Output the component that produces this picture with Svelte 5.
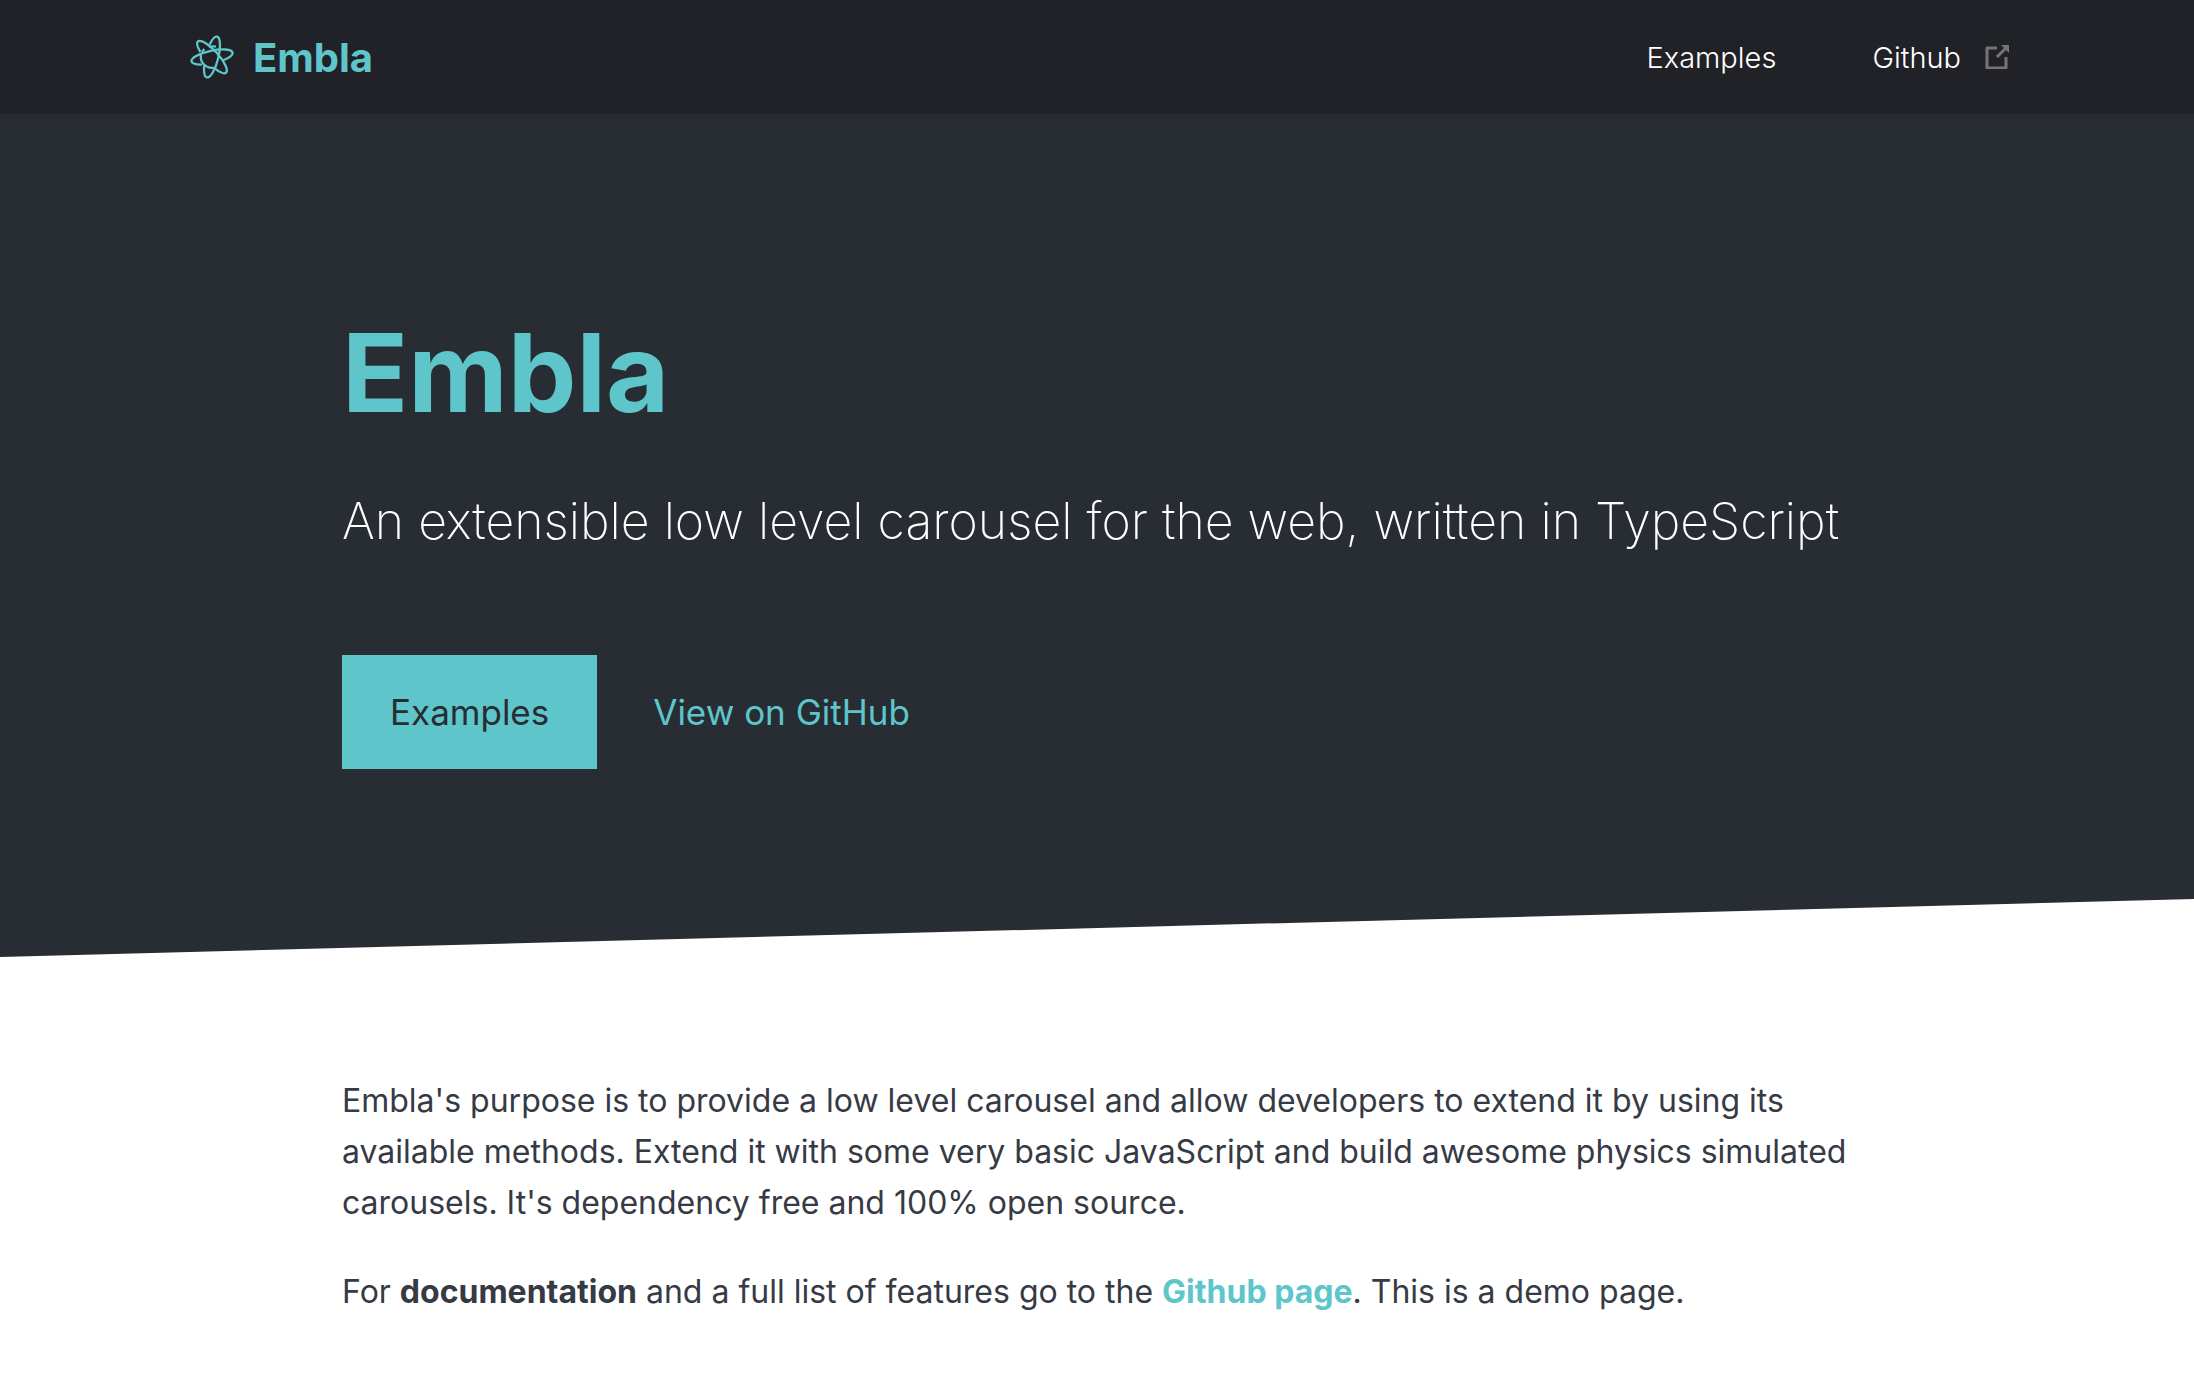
<script>
  const navLinks = [
    { label: 'Examples', href: '#examples', external: false },
    { label: 'Github', href: '#github', external: true },
  ];

  // tilt of each orbit in the logo
  const orbits = [-12, 48, 104];
</script>

<header class="header">
  <div class="header-inner">
    <a class="brand" href="#home">
      <svg class="brand-logo" viewBox="0 0 132 132" aria-hidden="true">
        <g fill="none" stroke="currentColor" stroke-width="7">
          {#each orbits as angle}
            <ellipse
              cx="66"
              cy="66"
              rx="63"
              ry="19"
              pathLength="100"
              stroke-dasharray="14 23 63 0"
              transform="rotate({angle} 66 66)"
            />
          {/each}
          <path d="M33 60A33 33 0 0 0 72 98" />
          <path d="M36 50L43 42M57 37A32 32 0 0 1 78 35" />
        </g>
      </svg>
      <span>Embla</span>
    </a>
    <nav class="nav">
      {#each navLinks as link}
        <a class="nav-link" href={link.href}>
          {link.label}
          {#if link.external}
            <svg class="external" viewBox="0 0 24 24" aria-hidden="true">
              <path d="M12 3H2v20h19V12" fill="none" stroke="currentColor" stroke-width="3" stroke-linejoin="round" />
              <path d="M12 12L21 3" fill="none" stroke="currentColor" stroke-width="3" />
              <path d="M16 0h8v8z" fill="currentColor" />
            </svg>
          {/if}
        </a>
      {/each}
    </nav>
  </div>
</header>

<main>
  <section class="hero">
    <div class="container">
      <h1>Embla</h1>
      <p class="tagline">An extensible low level carousel for the web, written in TypeScript</p>
      <div class="actions">
        <a class="button" href="#examples">Examples</a>
        <a class="button plain" href="#github">View on GitHub</a>
      </div>
    </div>
  </section>

  <section class="container intro">
    <p>
      Embla's purpose is to provide a low level carousel and allow developers to extend it by using its
      available methods. Extend it with some very basic JavaScript and build awesome physics simulated
      carousels. It's dependency free and 100% open source.
    </p>
    <p>
      For <strong>documentation</strong> and a full list of features go to the
      <a href="#github">Github page</a>. This is a demo page.
    </p>
  </section>
</main>

<style>
  :global(body) {
    background: #fff;
    color: #363a45;
    font-family: Inter, "Liberation Sans", sans-serif;
  }

  a {
    color: #5ec6cb;
    text-decoration: none;
  }

  .header {
    background: #212227;
  }

  .header-inner {
    display: flex;
    align-items: center;
    justify-content: space-between;
    box-sizing: border-box;
    max-width: 1824px;
    height: 114px;
    margin: 0 auto;
    padding-left: 5px;
  }

  .brand {
    display: flex;
    align-items: center;
    gap: 19px;
    font-size: 40px;
    font-weight: 700;
  }

  .brand-logo {
    width: 44px;
    height: 44px;
  }

  .nav {
    display: flex;
    gap: 96px;
  }

  .nav-link {
    display: flex;
    align-items: center;
    gap: 24px;
    color: #fff;
    font-size: 29px;
    font-weight: 300;
  }

  .external {
    width: 24px;
    height: 24px;
    color: #757575;
  }

  .hero {
    padding: 192px 0 188px;
    background: #282d34;
    clip-path: polygon(0 0, 100% 0, 100% calc(100% - 58px), 0 100%);
  }

  .container {
    box-sizing: border-box;
    max-width: 1520px;
    margin: 0 auto;
    padding-left: 5px;
  }

  h1 {
    margin: 0;
    color: #5ec6cb;
    font-size: 109px;
    font-weight: 700;
    line-height: 132px;
  }

  .tagline {
    margin: 48px 0 0;
    color: #fff;
    font-size: 50px;
    font-weight: 200;
    line-height: 70px;
  }

  .actions {
    display: flex;
    gap: 8px;
    margin-top: 99px;
  }

  .button {
    padding: 0 48px;
    background: #5ec6cb;
    color: #282d34;
    font-size: 35px;
    line-height: 114px;
  }

  .button.plain {
    background: none;
    color: #5ec6cb;
  }

  .intro {
    padding-top: 118px;
    padding-bottom: 30px;
  }

  .intro p {
    margin: 0 0 38px;
    font-size: 32px;
    line-height: 51px;
  }

  .intro a {
    font-weight: 700;
  }
</style>
